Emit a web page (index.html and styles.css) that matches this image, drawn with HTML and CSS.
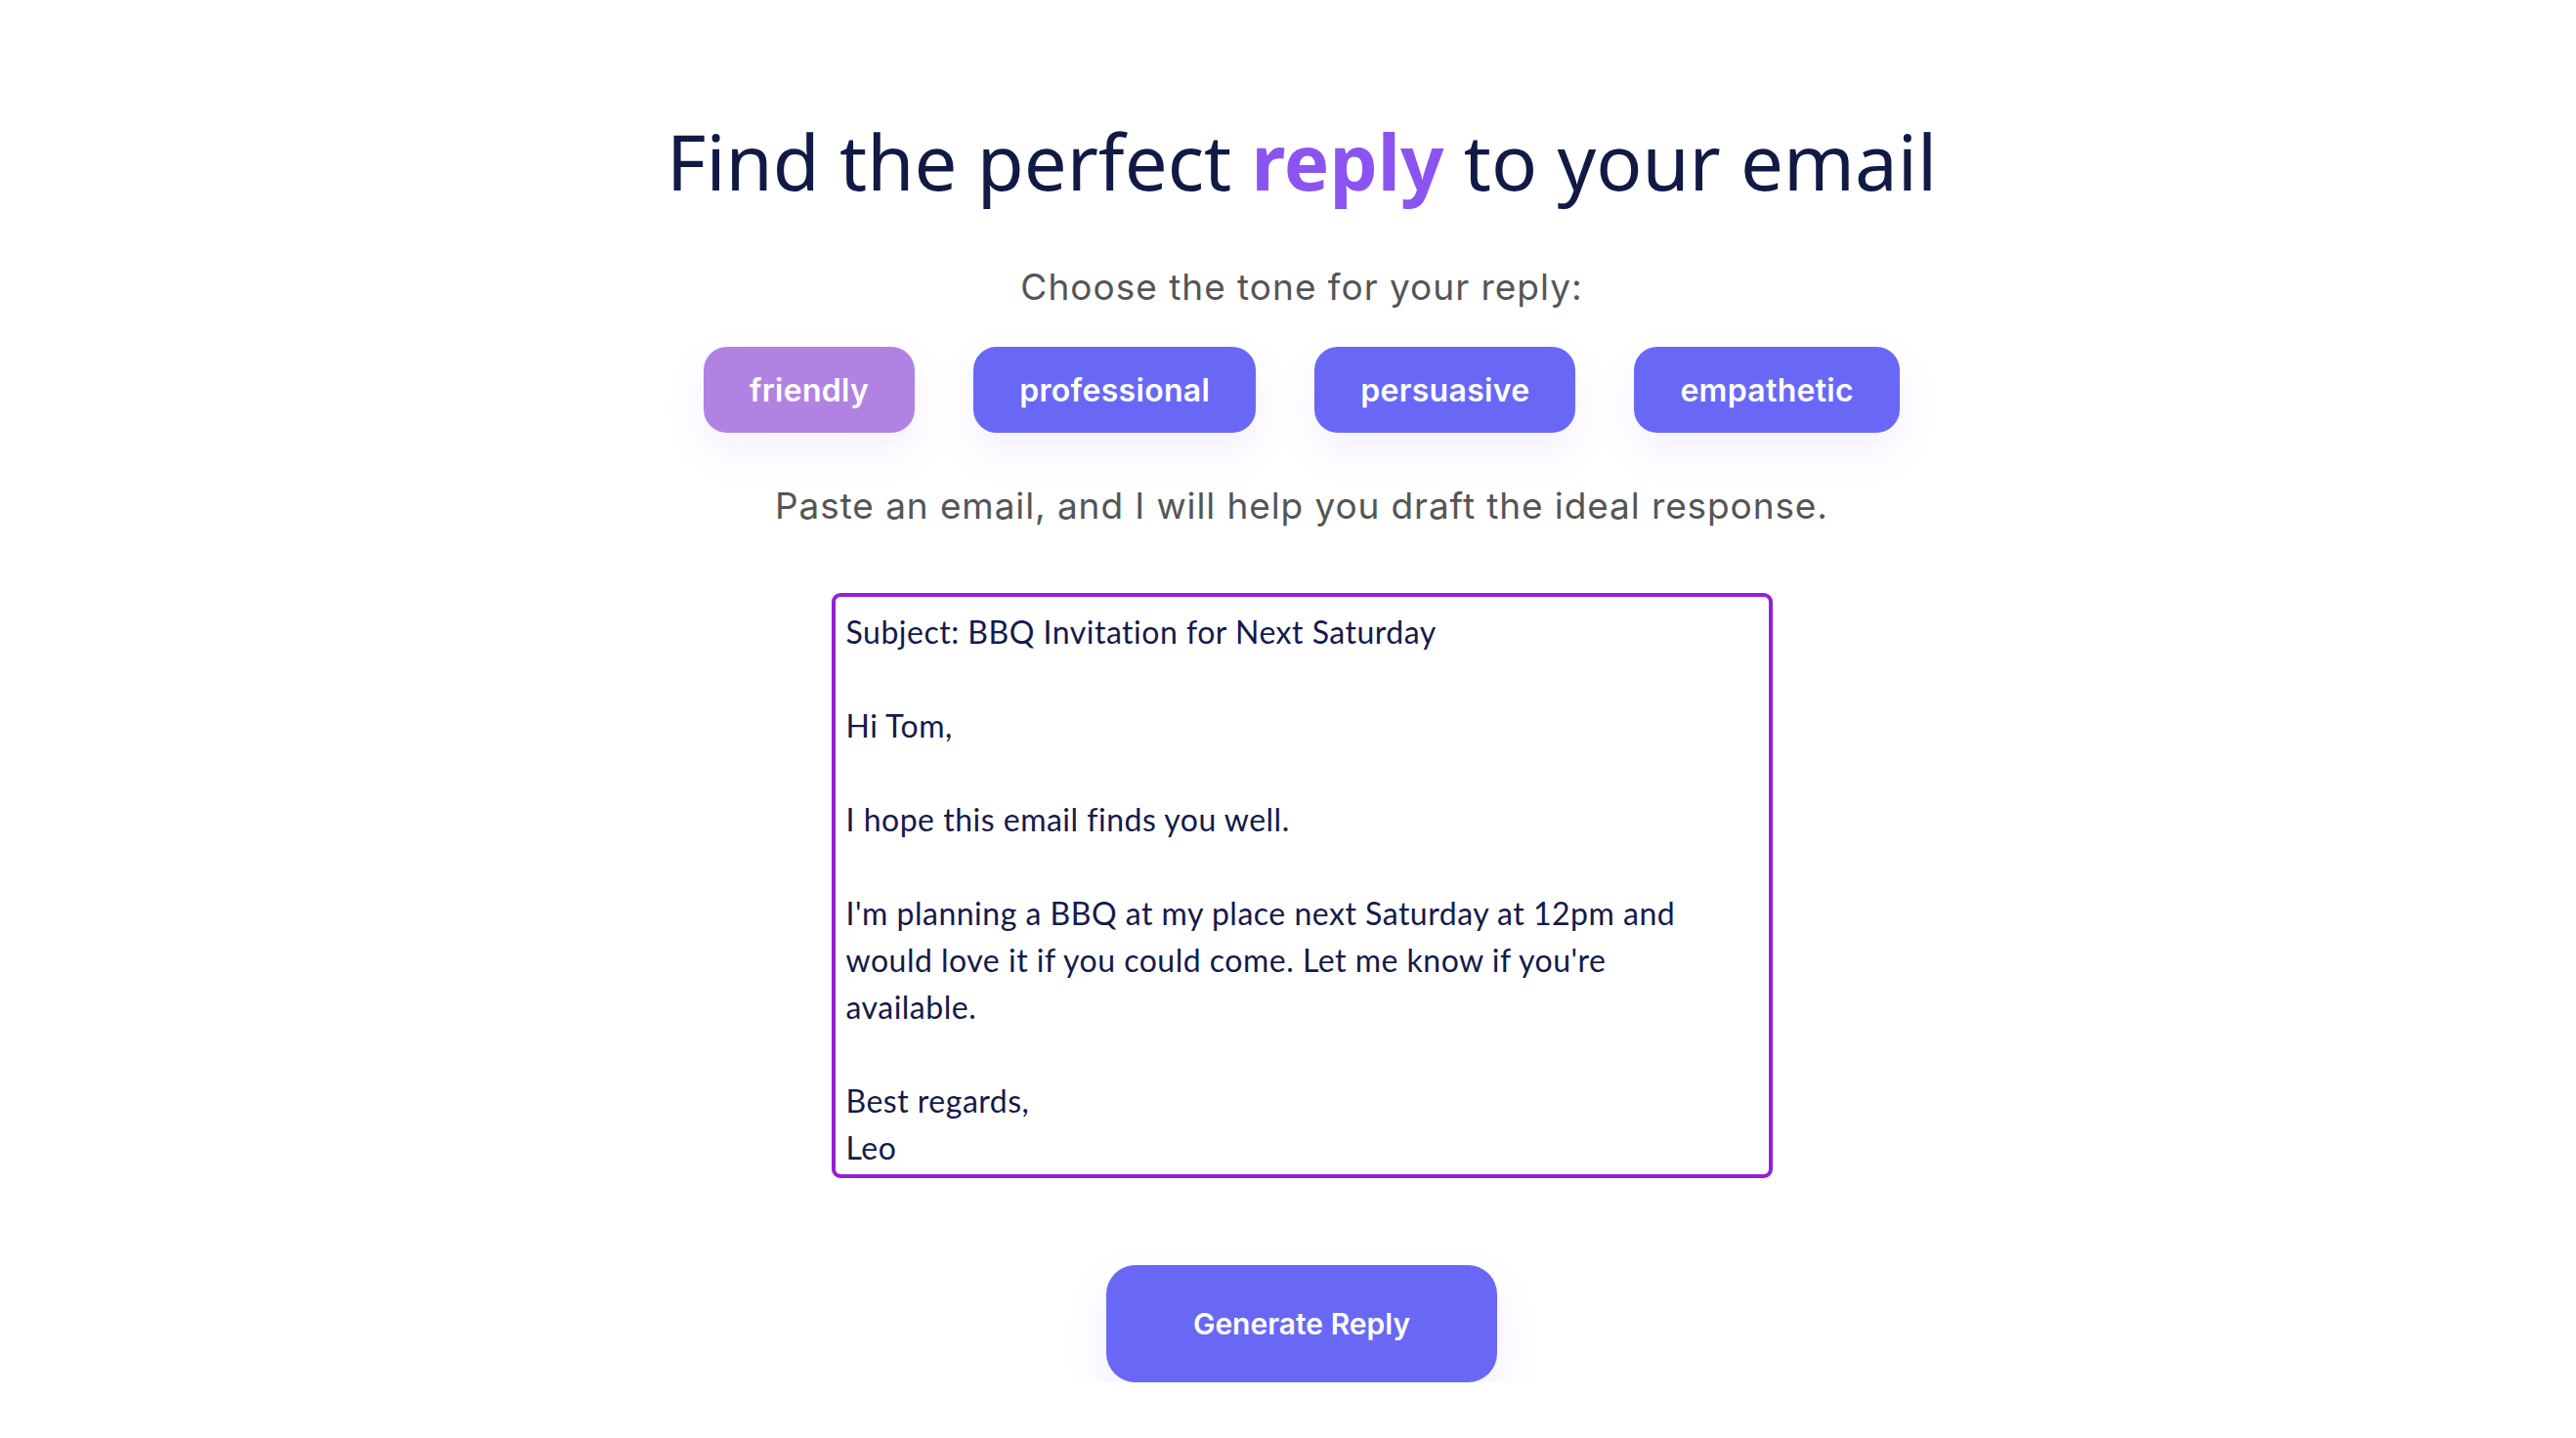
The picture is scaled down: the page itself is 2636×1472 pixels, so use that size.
FILE: index.html
```html
<!DOCTYPE html>
<html lang="en">
<head>
<meta charset="utf-8">
<title>Email Reply</title>
<link rel="stylesheet" href="styles.css">
</head>
<body>
<main class="page">
  <h1 class="title">Find the perfect <span class="accent">reply</span> to your email</h1>
  <p class="prompt">Choose the tone for your reply:</p>
  <div class="tones">
    <button class="tone tone-active">friendly</button>
    <button class="tone">professional</button>
    <button class="tone">persuasive</button>
    <button class="tone">empathetic</button>
  </div>
  <p class="prompt prompt-paste">Paste an email, and I will help you draft the ideal response.</p>
  <textarea class="email" spellcheck="false">Subject: BBQ Invitation for Next Saturday

Hi Tom,

I hope this email finds you well.

I'm planning a BBQ at my place next Saturday at 12pm and
would love it if you could come. Let me know if you're
available.

Best regards,
Leo</textarea>
  <button class="generate">Generate Reply</button>
</main>
</body>
</html>
```

FILE: styles.css
```css
html, body {
  margin: 0;
  padding: 0;
  background: #ffffff;
}

.page {
  display: flex;
  flex-direction: column;
  align-items: center;
  padding: 117px 0 0 28px;
}

.title {
  margin: 0;
  font-family: "Noto Sans", "Open Sans", sans-serif;
  font-weight: 400;
  font-size: 78px;
  line-height: 96px;
  letter-spacing: 0;
  color: #101a45;
  white-space: nowrap;
}

.accent {
  color: #8b54f0;
  font-weight: 700;
}

.prompt {
  margin: 57px 0 0;
  font-family: "Inter", "Liberation Sans", sans-serif;
  font-size: 37px;
  line-height: 48px;
  font-weight: 400;
  color: #555555;
  letter-spacing: 1px;
}

.prompt-paste {
  margin-top: 51px;
  letter-spacing: 0.9px;
}

.tones {
  display: flex;
  gap: 60px;
  margin-top: 37px;
}

.tone {
  height: 88px;
  padding: 0 47px;
  border: none;
  border-radius: 24px;
  background: #6968f6;
  color: #ffffff;
  font-family: "Inter", "Liberation Sans", sans-serif;
  font-size: 32px;
  font-weight: 600;
  letter-spacing: 0.3px;
  box-shadow: 0 18px 40px rgba(150, 110, 230, 0.10);
  cursor: pointer;
}

.tone-active {
  background: #b083e3;
}

.email {
  box-sizing: border-box;
  width: 963px;
  height: 599px;
  margin-top: 65px;
  padding: 12px 12px 3px 11px;
  border: 4px solid #9420d6;
  border-radius: 9px;
  font-family: "Lato", "Liberation Sans", sans-serif;
  font-size: 32px;
  line-height: 48px;
  letter-spacing: 0.5px;
  color: #141a4b;
  resize: none;
  overflow: hidden;
  outline: none;
  background: #ffffff;
}

.generate {
  width: 400px;
  height: 120px;
  margin-top: 89px;
  border: none;
  border-radius: 30px;
  background: #6968f6;
  color: #ffffff;
  font-family: "Inter", "Liberation Sans", sans-serif;
  font-size: 30px;
  font-weight: 600;
  box-shadow: 0 20px 44px rgba(150, 110, 230, 0.12);
  cursor: pointer;
}
```
